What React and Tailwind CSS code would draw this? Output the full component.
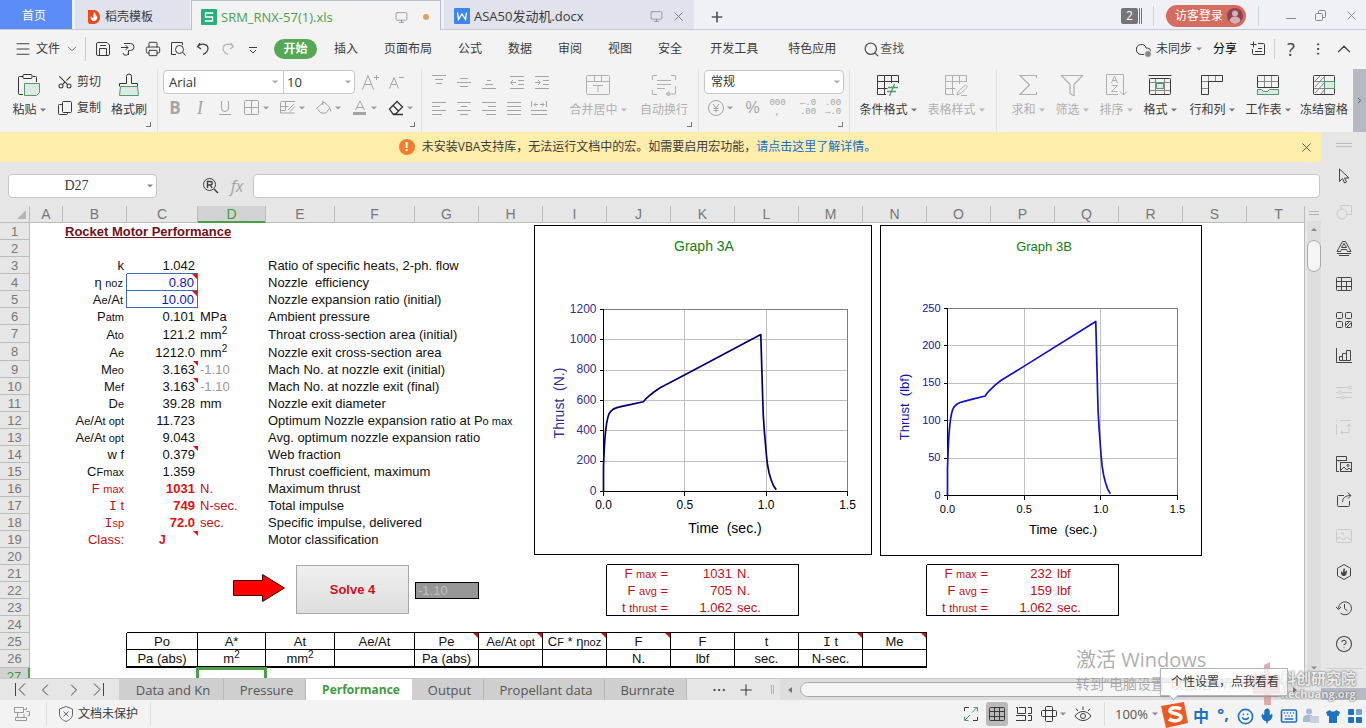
import {
  ChevronDown,
  ChevronLeft,
  ChevronRight,
  ChevronUp,
  CircleHelp,
  Cloud,
  Ellipsis,
  EllipsisVertical,
  Keyboard,
  Menu,
  Mic,
  Monitor,
  Plus,
  Printer,
  Scissors,
  Search,
  Smile,
  X,
} from "lucide-react";

// ---------------- Icon helpers ----------------

function Glyph({ w = 16, h = w, className = "", children }) {
  return (
    <svg
      width={w}
      height={h}
      viewBox={`0 0 ${w} ${h}`}
      fill="none"
      stroke="currentColor"
      strokeWidth="1"
      className={`shrink-0 ${className}`}
    >
      {children}
    </svg>
  );
}

function Caret({ className = "text-[#8a8a8a]" }) {
  return (
    <svg width="6" height="4" viewBox="0 0 6 4" className={`shrink-0 ${className}`}>
      <path d="M0 0.5h6L3 3.5z" fill="currentColor" />
    </svg>
  );
}

function Lines({ rows, w = 14 }) {
  return (
    <Glyph w={w} h={14}>
      {rows.map(([x1, x2, y], i) => (
        <path key={i} d={`M${x1} ${y + 0.5}H${x2}`} />
      ))}
    </Glyph>
  );
}

// ---------------- Title bar ----------------

function TitleBar() {
  return (
    <header className="flex h-[30px] shrink-0 border-b border-[#c5c9dc] bg-[#f0f1f6]">
      <button className="w-[72px] bg-[#5b8cf7] pr-1 pt-[3px] text-white">首页</button>
      <button className="ml-[3px] flex w-[115px] items-center gap-1 bg-[#e0e3ec] pl-3 pt-[5px]">
        <svg width="14" height="16" viewBox="0 0 14 16">
          <path d="M1 1h6a6 7 0 0 1 0 14H3a2 2 0 0 1-2-2z" fill="#f0481c" />
          <path d="M7 3c3 2 1 4 2 5l1-2c1 4-1 6-3 6S3 10 4 7c1 1 1 2 2 2 1-2 0-4 1-6z" fill="#fff" />
        </svg>
        稻壳模板
      </button>
      <button className="mb-[-1px] ml-[1px] flex w-[250px] items-center gap-1 border border-b-0 border-[#b9bed2] bg-[#f3f3f3] pl-[9px] pt-[3px] text-[#4c9f4c]">
        <svg width="16" height="16" viewBox="0 0 16 16" className="shrink-0">
          <rect width="16" height="16" rx="1" fill="#27b07c" />
          <path d="M11.500 5V4h-7v4h7v4h-7v-1" fill="none" stroke="#fff" strokeWidth="1.300" />
        </svg>
        <span className="flex-1 text-left text-[13px]">SRM_RNX-57(1).xls</span>
        <Monitor size={13} strokeWidth={1.5} className="text-[#8b8e96]" />
        <span className="mx-[11px] size-[6px] rounded-full bg-[#e2a060]" />
      </button>
      <button className="ml-[3px] flex w-[250px] items-center gap-1 bg-[#e0e3ec] pl-[10px] pt-[3px]">
        <svg width="16" height="16" viewBox="0 0 16 16" className="shrink-0">
          <rect width="16" height="16" rx="1" fill="#3f86ea" />
          <path d="M3.500 4.500l1 7L8 6l3.500 5.500 1-7" fill="none" stroke="#fff" strokeWidth="1.300" />
        </svg>
        <span className="flex-1 text-left text-[13px]">ASA50发动机.docx</span>
        <Monitor size={13} strokeWidth={1.5} className="text-[#8b8e96]" />
        <X size={15} strokeWidth={1.5} className="mx-1 mr-[8px] text-[#777]" />
      </button>
      <button aria-label="新建" className="ml-[15px] pt-1">
        <Plus size={16} strokeWidth={2.5} className="text-[#555]" />
      </button>

      <div className="ml-auto flex items-center pt-[2px]">
        <span className="flex h-4 gap-[1px]">
          <b className="w-[17px] rounded-[2px] bg-[#737578] text-center font-normal leading-4 text-white">2</b>
          <i className="w-px bg-[#737578]" />
          <i className="w-px bg-[#737578]" />
        </span>
        <span className="ml-[11px] h-[20px] w-px bg-[#d0d2d8]" />
        <button className="ml-3 flex h-[22px] w-[80px] items-center gap-1 rounded-full bg-[#d66b5f] pl-[9px] text-white">
          访客登录
          <svg width="16" height="16" viewBox="0 0 16 16" className="shrink-0">
            <circle cx="8" cy="8" r="8" fill="#8c4353" />
            <circle cx="8" cy="5.500" r="3" fill="#d5aeb6" />
            <path d="M2.500 13a5.500 4.500 0 0 1 11 0A8 8 0 0 1 8 16a8 8 0 0 1-5.500-3z" fill="#d5aeb6" />
          </svg>
        </button>
        <span className="ml-3 h-[20px] w-px bg-[#d0d2d8]" />
        <span className="flex w-[107px] items-center justify-between pl-[26px] pr-[7px] text-[#888]">
          <button aria-label="最小化">
            <Glyph w={12} h={12}><path d="M1 8.500h10" /></Glyph>
          </button>
          <button aria-label="还原">
            <Glyph w={13} h={13}>
              <rect x="1.500" y="4.500" width="7" height="7" rx="1" />
              <path d="M4.500 4V2.500a1 1 0 0 1 1-1h5a1 1 0 0 1 1 1v5a1 1 0 0 1-1 1H9" />
            </Glyph>
          </button>
          <button aria-label="关闭">
            <X size={15} strokeWidth={1.4} />
          </button>
        </span>
      </div>
    </header>
  );
}

// ---------------- Menu bar ----------------

const MENU_TABS = [
  ["插入", "px-[13px]"],
  ["页面布局", "px-[13px]"],
  ["公式", "px-[13px]"],
  ["数据", "px-[13px]"],
  ["审阅", "px-[13px]"],
  ["视图", "px-[13px]"],
  ["安全", "px-[13px]"],
  ["开发工具", "px-[15px]"],
  ["特色应用", "px-[15px]"],
];

function QuickButton({ label, off, children }) {
  return (
    <button aria-label={label} className={`flex w-[25px] justify-center pr-px ${off ? "text-[#b5b5b5]" : ""}`}>
      {children}
    </button>
  );
}

function MenuBar() {
  return (
    <nav className="flex h-[39px] shrink-0 items-center bg-[#f3f3f3] pb-px pl-[14px]">
      <button className="flex items-center">
        <Menu size={18} strokeWidth={1.3} />
        <span className="ml-1">文件</span>
        <ChevronDown size={14} strokeWidth={1.3} className="ml-[5px]" />
      </button>
      <span className="ml-[6px] h-6 w-px bg-[#c9c9c9]" />
      <div className="flex pl-[5px]">
        <QuickButton label="保存">
          <Glyph>
            <path d="M1.500 13V3a1.500 1.500 0 0 1 1.500-1.500h9l2.500 2.500v9a1.500 1.500 0 0 1-1.500 1.500H3A1.500 1.500 0 0 1 1.500 13zM4.500 14V7.500h7V14M5 4.500h6" />
          </Glyph>
        </QuickButton>
        <QuickButton label="输出为PDF">
          <Glyph>
            <path d="M4 2.500h6.500a3.500 3.500 0 0 1 0 7H8.500V14M1 6.500h7M5.500 4l2.500 2.500L5.500 9M8.500 10v1a2.500 2.500 0 0 1-5.500 1" />
          </Glyph>
        </QuickButton>
        <QuickButton label="打印">
          <Printer size={16} strokeWidth={1.5} />
        </QuickButton>
        <QuickButton label="打印预览">
          <Glyph>
            <path d="M6 13.500H1.500v-12h11V4M12.500 11l3 3.500" />
            <circle cx="9.500" cy="8.500" r="4" />
          </Glyph>
        </QuickButton>
        <QuickButton label="撤销">
          <Glyph><path d="M5 2L2.500 5.500 6 8M2.500 5.500C6 2 13 2.500 13 7.500c0 3-2 4.500-5 6" strokeWidth="1.200" /></Glyph>
        </QuickButton>
        <QuickButton label="恢复" off>
          <Glyph><path d="M11 2l2.500 3.500L10 8M13.500 5.500C10 2 3 2.500 3 7.500c0 3 2 4.500 5 6" strokeWidth="1.200" /></Glyph>
        </QuickButton>
        <QuickButton label="更多">
          <Glyph w={10} h={16}><path d="M1 6.500h8M2 9l3 3 3-3" /></Glyph>
        </QuickButton>
      </div>
      <button className="ml-2 h-5 w-[43px] rounded-full bg-[#55a955] font-bold leading-5 text-white">开始</button>
      <div className="ml-1 flex">
        {MENU_TABS.map(([label, pad]) => (
          <button key={label} className={pad}>{label}</button>
        ))}
      </div>
      <button className="ml-[12px] flex items-center text-[#555]">
        <Search size={17} strokeWidth={1.8} />
        查找
      </button>

      <div className="ml-auto flex items-center pr-[10px]">
        <button className="flex items-center gap-1">
          <span className="relative">
            <Cloud size={17} strokeWidth={1.4} />
            <span className="absolute bottom-0 right-0 size-2 rounded-full border border-[#f3f3f3] bg-[#888]" />
          </span>
          未同步
          <Caret />
        </button>
        <button className="ml-[11px] text-black">分享</button>
        <button aria-label="批注" className="ml-[13px]">
          <Glyph>
            <path d="M8 2.500h5.500a1 1 0 0 1 1 1v10h-11a1 1 0 0 1-1-1V8M3.500 0.500v6M0.500 3.500h6M5 10.500h7M8 7.500h4" />
          </Glyph>
        </button>
        <span className="ml-2 h-5 w-px bg-[#d0d0d0]" />
        <button aria-label="帮助" className="ml-1 w-6 text-[18px] leading-5">?</button>
        <button aria-label="选项" className="ml-[3px] flex w-6 justify-center">
          <EllipsisVertical size={16} strokeWidth={1.5} />
        </button>
        <button aria-label="收起功能区" className="ml-[2px] flex w-6 justify-center">
          <ChevronUp size={22} strokeWidth={1.2} />
        </button>
      </div>
    </nav>
  );
}

// ---------------- Ribbon ----------------

function BigButton({ label, caret, off, width, children }) {
  return (
    <button className={`flex shrink-0 flex-col items-center ${width} ${off ? "text-[#b0b0b0]" : ""}`}>
      <span className="flex h-[32px] items-center">{children}</span>
      <span className="flex h-[18px] items-center gap-[3px] whitespace-nowrap leading-[18px]">
        {label}
        {caret && <Caret className={off ? "text-[#b8b8b8]" : "text-[#777]"} />}
      </span>
    </button>
  );
}

function Tool({ label, width = "w-[25px]", children }) {
  return (
    <button aria-label={label} className={`flex h-[26px] shrink-0 items-center justify-center pr-px ${width}`}>
      {children}
    </button>
  );
}

function DropTool({ label, dark, children }) {
  return (
    <button
      aria-label={label}
      className={`flex h-[26px] w-[36px] shrink-0 items-center gap-[3px] pl-[2px] ${dark ? "text-[#333]" : ""}`}
    >
      {children}
      <Caret className="text-[#999]" />
    </button>
  );
}

function Group({ className = "", corner, children }) {
  return (
    <section className={`relative flex h-full shrink-0 border-r border-[#e2e2e2] ${className}`}>
      {children}
      {corner && (
        <span className="absolute bottom-[5px] right-[6px] size-[5px] border-b border-r border-[#777]" />
      )}
    </section>
  );
}

function Ribbon() {
  return (
    <div className="flex h-[63px] shrink-0 bg-[#f3f3f3]">
      <Group corner className="w-[158px] pl-[10px]">
        <BigButton label="粘贴" caret width="w-[38px]">
          <Glyph w={24} h={24}>
            <path d="M6 3.500H2.500a1 1 0 0 0-1 1v16a1 1 0 0 0 1 1H6M16 3.500h2.500a1 1 0 0 1 1 1V9" stroke="#333" />
            <rect x="6" y="1.500" width="9" height="4" rx="1" stroke="#333" />
            <path d="M7.500 10.500h15v9l-3 3h-12z" fill="#dfe9e3" stroke="#4f9a6c" />
          </Glyph>
        </BigButton>
        <div className="ml-[9px] flex flex-col">
          <button className="flex h-[26px] items-center gap-1">
            <Scissors size={16} strokeWidth={1.6} className="-rotate-90" />
            剪切
          </button>
          <button className="flex h-[26px] items-center gap-1">
            <Glyph>
              <rect x="5.500" y="1.500" width="9" height="11" rx="1" />
              <path d="M5 4.500H2.500a1 1 0 0 0-1 1v8a1 1 0 0 0 1 1h7a1 1 0 0 0 1-1V13" />
            </Glyph>
            复制
          </button>
        </div>
        <BigButton label="格式刷" width="ml-[6px] w-[44px]">
          <Glyph w={22} h={24}>
            <path d="M1.500 13.500v-3h7v-7a2 2 0 0 1 5 0v7h6v3" stroke="#333" />
            <path d="M2.500 13.500h17l1 9h-19z" fill="#dfe9e3" stroke="#4f9a6c" />
          </Glyph>
        </BigButton>
      </Group>

      <Group corner className="w-[264px] pl-[5px] text-[#a5a5a5]">
        <div>
          <div className="flex h-[26px] items-center">
            <div className="flex h-6 w-[192px] rounded border border-[#c6c6c6] bg-white text-[13px] text-[#333]">
              <button className="flex w-[120px] items-center justify-between border-r border-[#c6c6c6] px-[5px]">
                Arial <Caret className="text-[#aaa]" />
              </button>
              <button className="flex flex-1 items-center justify-between px-[3px]">
                10 <Caret className="text-[#aaa]" />
              </button>
            </div>
            <button aria-label="增大字号" className="ml-[2px] flex w-[26px] justify-center">
              <Glyph w={18} h={18}><path d="M1.500 16.500L7 2.500l5.500 14M3.500 11.500h7M13 4.500h5M15.500 2v5" /></Glyph>
            </button>
            <button aria-label="减小字号" className="flex w-[26px] justify-center">
              <Glyph w={18} h={18}><path d="M2.500 15.500L7 4.500l4.500 11M4.500 11.500h5M12 4.500h5" /></Glyph>
            </button>
          </div>
          <div className="flex">
            <Tool label="加粗"><b className="text-[17px]">B</b></Tool>
            <Tool label="倾斜"><i className="font-['Liberation_Serif'] text-[18px]">I</i></Tool>
            <Tool label="下划线">
              <Glyph w={12} h={16}><path d="M2.500 1v7a3.500 3.500 0 0 0 7 0V1M0 14.500h12" /></Glyph>
            </Tool>
            <span className="w-1" />
            <DropTool label="边框">
              <Glyph><rect x="0.500" y="0.500" width="14" height="14" rx="1" /><path d="M7.500 0.500v14M0.500 7.500h14" /></Glyph>
            </DropTool>
            <DropTool label="绘图边框">
              <Glyph>
                <path d="M15 1.500H1.500a1 1 0 0 0-1 1V13h14M0.500 6.500h8M5.500 1.500v9M0.500 10.500h5M8 10l6-6M10 11.500l5-5" />
              </Glyph>
            </DropTool>
            <DropTool label="填充颜色">
              <Glyph><path d="M2 7l6-5 6 5.500-4 5.500H5L1 8.500zM7 0.500V5M14 8.500l1 3" /></Glyph>
            </DropTool>
            <DropTool label="字体颜色">
              <Glyph><path d="M3.500 10L8 1l4.500 9M5 7.500h6" /><path d="M1 13.500h13" strokeWidth="3" /></Glyph>
            </DropTool>
            <DropTool label="清除" dark>
              <Glyph><path d="M1.500 9l7.500-7.500 5.500 5.500-7 7H5zM5 5.500l5.500 5.500M5 14.500h10" strokeWidth="1.300" /></Glyph>
            </DropTool>
          </div>
        </div>
      </Group>

      <Group corner className="w-[277px] pl-[5px] text-[#a5a5a5]">
        <div className="w-[128px]">
          <div className="flex">
            <Tool label="顶端对齐"><Lines rows={[[0, 14, 0], [3, 11, 4], [4, 10, 8]]} /></Tool>
            <Tool label="垂直居中"><Lines rows={[[3, 11, 3], [0, 14, 7], [3, 11, 11]]} /></Tool>
            <Tool label="底端对齐"><Lines rows={[[5, 9, 5], [3, 11, 9], [0, 14, 13]]} /></Tool>
            <span className="w-[3px]" />
            <Tool label="减少缩进">
              <Glyph w={14} h={14}><path d="M0 1.500h14M8 5.500h6M8 9.500h6M0 13.500h14M1 7.500h5M3 5L0.500 7.500 3 10" /></Glyph>
            </Tool>
            <Tool label="增加缩进">
              <Glyph w={14} h={14}><path d="M0 1.500h14M8 5.500h6M8 9.500h6M0 13.500h14M0 7.500h5M3 5l2.500 2.500L3 10" /></Glyph>
            </Tool>
          </div>
          <div className="flex">
            <Tool label="左对齐"><Lines rows={[[0, 14, 1], [0, 8, 5], [0, 14, 9], [0, 10, 13]]} /></Tool>
            <Tool label="水平居中"><Lines rows={[[0, 14, 1], [4, 10, 5], [0, 14, 9], [3, 11, 13]]} /></Tool>
            <Tool label="右对齐"><Lines rows={[[0, 14, 1], [6, 14, 5], [0, 14, 9], [4, 14, 13]]} /></Tool>
            <Tool label="两端对齐"><Lines rows={[[0, 14, 1], [0, 14, 5], [0, 14, 9], [0, 14, 13]]} /></Tool>
            <Tool label="分散对齐">
              <Glyph><path d="M0.500 1v6M15.500 1v6M3 4.500h4M9 4.500h4M5 2.500l-2 2 2 2M11 2.500l2 2-2 2M0 10.500h16M0 14.500h16" /></Glyph>
            </Tool>
          </div>
        </div>
        <BigButton label="合并居中" caret off width="ml-[11px] w-[64px]">
          <Glyph w={24} h={22}>
            <rect x="0.500" y="1.500" width="23" height="19" rx="1" />
            <path d="M0.500 7.500h23M8.500 1.500v6M15.500 1.500v6M7 11.500h10M12 11.500V18" />
          </Glyph>
        </BigButton>
        <BigButton label="自动换行" off width="ml-[6px] w-[56px]">
          <Glyph w={24} h={22}>
            <path d="M5 1.500H0.500V6M19 1.500h4.500V6M5 20.500H0.500V16M5 6.500h14M5 10.500h14M5 14.500h8M23.500 12v8h-9M17 17.500l-3 2.500 3 2z" />
          </Glyph>
        </BigButton>
      </Group>

      <Group corner className="w-[151px] pl-[5px] text-[#a5a5a5]">
        <div>
          <div className="flex h-[26px] items-center">
            <select
              aria-label="数字格式"
              className="h-6 w-[140px] appearance-none rounded border border-[#c6c6c6] bg-white pl-[6px] text-[12px] text-[#333]"
            >
              <option>常规</option>
            </select>
            <span className="ml-[-10px]"><Caret className="text-[#aaa]" /></span>
          </div>
          <div className="flex pl-[2px]">
            <DropTool label="货币">
              <Glyph><circle cx="8" cy="8" r="7.500" /><path d="M5 4l3 4 3-4M8 8v4.500M5.500 8.500h5M5.500 10.500h5" /></Glyph>
            </DropTool>
            <Tool label="百分比" width="w-[22px]"><span className="font-['Liberation_Sans'] text-[16px]">%</span></Tool>
            <Tool label="千位分隔" width="w-[28px]">
              <span className="font-['Liberation_Mono'] text-[9px] leading-[9px]">000<br />,</span>
            </Tool>
            <span className="w-[4px]" />
            <Tool label="增加小数位"><span className="font-['Liberation_Mono'] text-[9px] leading-[9px]">←.0<br />.00</span></Tool>
            <Tool label="减少小数位"><span className="font-['Liberation_Mono'] text-[9px] leading-[9px]">.00<br />→.0</span></Tool>
          </div>
        </div>
      </Group>

      <Group className="w-[147px] gap-1 pl-[6px]">
        <BigButton label="条件格式" caret width="w-[64px]">
          <Glyph w={24} h={22}>
            <path d="M10 20.500H1.500v-19h21V9M1.500 7.500h21M1.500 14.500h10M8.500 1.500v19M15.500 1.500V9" />
            <path d="M12 13.500h10M11 17.500h9M18.500 10l-5 12" stroke="#4f9a6c" strokeWidth="1.300" />
          </Glyph>
        </BigButton>
        <BigButton label="表格样式" caret off width="w-[64px]">
          <Glyph w={24} h={22}>
            <path d="M10 20.500H1.500v-19h21V8M1.500 7.500h21M1.500 14.500h10M8.500 1.500v19M15.500 1.500V10M13 21l1.500-4 7-6 2 2-7 6.500zM17 21.500h6" />
          </Glyph>
        </BigButton>
      </Group>

      <section className="flex min-w-0 flex-1 gap-1 overflow-hidden pl-[11px]">
        <BigButton label="求和" caret off width="w-[40px]">
          <Glyph w={20} h={22}><path d="M18.500 4V1.500H2L11.500 11 2 20.500h16.500V18" strokeWidth="1.200" /></Glyph>
        </BigButton>
        <BigButton label="筛选" caret off width="w-[40px]">
          <Glyph w={24} h={22}><path d="M1.500 1.500h21L14 10.500V22l-4-2.500v-9z" strokeWidth="1.200" /></Glyph>
        </BigButton>
        <BigButton label="排序" caret off width="w-[40px]">
          <Glyph w={24} h={24}>
            <path d="M14 21.500H2.500v-20h17V9M19.500 9v13M16 18.500l3.500 3.500 3.500-3.500M7.500 10l3-7 3 7M8.500 7.500h4M7.500 12.500h6l-6 6h6" />
          </Glyph>
        </BigButton>
        <BigButton label="格式" caret width="w-[40px]">
          <Glyph w={24} h={22}>
            <path d="M0.500 1.500h23" />
            <path d="M7.500 4.500v16M16.500 4.500v16M1.500 8.500h21M1.500 16.500h21" stroke="#888" />
            <rect x="1.500" y="4.500" width="21" height="16" rx="1" />
            <rect x="8.500" y="9.500" width="7" height="5" fill="#dfe9e3" stroke="#4f9a6c" />
          </Glyph>
        </BigButton>
        <BigButton label="行和列" caret width="w-[56px]">
          <Glyph w={24} h={22}>
            <path d="M8.500 1.500v6M15.500 1.500v6M1.500 7.500h7M1.500 14.500h7" stroke="#888" />
            <path d="M1.500 1.500h21v6h-14v13h-7z" />
          </Glyph>
        </BigButton>
        <BigButton label="工作表" caret width="w-[48px]">
          <Glyph w={24} h={22}>
            <path d="M1.500 7.500h21M8.500 1.500v12M15.500 1.500v12" stroke="#888" />
            <path d="M1.500 13.500v-11a1 1 0 0 1 1-1h19a1 1 0 0 1 1 1v11z" />
            <path d="M1.500 15.500v5h21v-5h-9l-2 2h-4l-2-2z" fill="#dfe9e3" stroke="#4f9a6c" />
          </Glyph>
        </BigButton>
        <BigButton label="冻结窗格" width="w-[56px]">
          <Glyph w={24} h={22}>
            <path d="M12.500 1.500v19M1.500 7.500h11M1.500 14.500h11M3 7l5-5M3 13l9-10M3 19l9-10M9 20l4-5" stroke="#888" />
            <rect x="1.500" y="1.500" width="21" height="19" rx="1" />
            <rect x="12.500" y="7.500" width="10" height="7" fill="#dfe9e3" stroke="#4f9a6c" />
          </Glyph>
        </BigButton>
      </section>
      <button aria-label="向右滚动" className="flex w-[13px] shrink-0 items-center justify-center bg-[#b5b9c2]">
        <ChevronRight size={9} strokeWidth={2} />
      </button>
    </div>
  );
}

// ---------------- Message + formula bar ----------------

function MessageBar() {
  return (
    <div className="flex h-[30px] shrink-0 items-center bg-[#ffedab] pr-[7px]">
      <p className="flex flex-1 items-center justify-center">
        <b className="mr-[7px] size-4 rounded-full bg-[#f08030] text-center leading-4 text-white">!</b>
        未安装VBA支持库，无法运行文档中的宏。如需要启用宏功能，
        <a href="#help" className="text-[#0f6cd6]">请点击这里了解详情。</a>
        <span className="w-6" />
      </p>
      <button aria-label="关闭提示">
        <X size={15} strokeWidth={1.3} />
      </button>
    </div>
  );
}

function FormulaBar() {
  return (
    <div className="flex h-11 shrink-0 items-center pl-2 pr-px pt-1">
      <div className="flex h-6 w-[149px] items-center rounded border border-[#c6c6c6] bg-white pr-[3px]">
        <input
          aria-label="名称框"
          defaultValue="D27"
          className="w-full pr-[3px] text-center font-['Liberation_Serif'] text-[14px] outline-none"
        />
        <Caret />
      </div>
      <button aria-label="查找函数" className="ml-[46px]">
        <Glyph>
          <circle cx="6.500" cy="6.500" r="6" />
          <path d="M4.500 10V3.500h3a1.500 1.500 0 0 1 0 3.500h-3M7.500 7l1.500 3M11 11l4 4" strokeWidth="1.400" />
        </Glyph>
      </button>
      <button aria-label="插入函数" className="ml-[9px] w-[18px] text-[16px] italic leading-5 text-[#a2a2a2]">fx</button>
      <input aria-label="编辑栏" className="ml-[7px] h-6 min-w-0 flex-1 rounded border border-[#c6c6c6] bg-white px-2 outline-none" />
    </div>
  );
}

// ---------------- Sheet data ----------------

const COLUMNS = [
  ["A", "w-[33px]"],
  ["B", "w-[64px]"],
  ["C", "w-[71px]"],
  ["D", "w-[68px]"],
  ["E", "w-[69px]"],
  ["F", "w-[80px]"],
  ["G", "w-[64px]"],
  ["H", "w-[64px]"],
  ["I", "w-[64px]"],
  ["J", "w-[64px]"],
  ["K", "w-[64px]"],
  ["L", "w-[64px]"],
  ["M", "w-[64px]"],
  ["N", "w-[64px]"],
  ["O", "w-[64px]"],
  ["P", "w-[64px]"],
  ["Q", "w-[64px]"],
  ["R", "w-[64px]"],
  ["S", "w-[64px]"],
  ["T", ""],
];

function S({ children }) {
  return <small className="text-[11px] leading-none">{children}</small>;
}

// Roman capital with bars, used for impulse and motor class
function Bar({ children }) {
  return <span className="font-['Liberation_Mono'] leading-none">{children}</span>;
}

const mm2 = <>mm<sup className="text-[10px]">2</sup></>;
const RED = "text-[#c01020]";
const BOLD = "font-bold text-[#e01010]";
const BLUE = "text-[#1010d0]";
const GHOST = "text-[#999]";

// row: [label, value, unit, description, value class, unit class]
const RESULTS = {
  3: ["k", "1.042", "", "Ratio of specific heats, 2-ph. flow"],
  4: [<>η <S>noz</S></>, "0.80", "", "Nozzle\u00a0 efficiency", BLUE],
  5: [<>A<S>e</S>/A<S>t</S></>, "10.00", "", "Nozzle expansion ratio (initial)", BLUE],
  6: [<>P<S>atm</S></>, "0.101", "MPa", "Ambient pressure"],
  7: [<>A<S>to</S></>, "121.2", mm2, "Throat cross-section area (initial)"],
  8: [<>A<S>e</S></>, "1212.0", mm2, "Nozzle exit cross-section area"],
  9: [<>M<S>eo</S></>, "3.163", "-1.10", "Mach No. at nozzle exit (initial)", "", GHOST],
  10: [<>M<S>ef</S></>, "3.163", "-1.10", "Mach No. at nozzle exit (final)", "", GHOST],
  11: [<>D<S>e</S></>, "39.28", "mm", "Nozzle exit diameter"],
  12: [<>A<S>e</S>/A<S>t opt</S></>, "11.723", "", <>Optimum Nozzle expansion ratio at P<S>o max</S></>],
  13: [<>A<S>e</S>/A<S>t opt</S></>, "9.043", "", "Avg. optimum nozzle expansion ratio"],
  14: ["w f", "0.379", "", "Web fraction"],
  15: [<>C<S>Fmax</S></>, "1.359", "", "Thrust coefficient, maximum"],
  16: [<>F <S>max</S></>, "1031", "N.", "Maximum thrust", BOLD, RED],
  17: [<><Bar>I</Bar> t</>, "749", "N-sec.", "Total impulse", BOLD, RED],
  18: [<><Bar>I</Bar><S>sp</S></>, "72.0", "sec.", "Specific impulse, delivered", BOLD, RED],
  19: ["Class:", <Bar>J</Bar>, "", "Motor classification", BOLD, RED],
};

const CELLS = {
  B1: [<u>Rocket Motor Performance</u>, "text-left pl-[2px] font-bold text-[#701018]"],
  G22: ["-1.10", "pl-[2px] border border-black bg-[#969696] text-[#c0c0c0]"],
};

Object.entries(RESULTS).forEach(([row, [label, value, unit, text, valueClass = "", unitClass = ""]]) => {
  CELLS[`B${row}`] = [label, `text-right pr-[3px] ${row > 15 ? RED : ""}`];
  CELLS[`C${row}`] = [value, `${row === "19" ? "text-center" : "text-right pr-[3px]"} ${valueClass}`];
  CELLS[`D${row}`] = [unit, `pl-[2px] ${unitClass}`];
  CELLS[`E${row}`] = [text, "pl-[2px]"];
});

const SUMMARY = [
  [21, <>F <S>max</S> =</>, "1031", "N.", "232", "lbf"],
  [22, <>F <S>avg</S> =</>, "705", "N.", "159", "lbf"],
  [23, <>t <S>thrust</S> =</>, "1.062", "sec.", "1.062", "sec."],
];

SUMMARY.forEach(([row, label, a, unitA, b, unitB]) => {
  CELLS[`J${row}`] = CELLS[`O${row}`] = [label, `text-right pr-[3px] ${RED}`];
  CELLS[`K${row}`] = [a, `text-right pr-[3px] ${RED}`];
  CELLS[`L${row}`] = [unitA, `pl-[2px] ${RED}`];
  CELLS[`P${row}`] = [b, `text-right pr-[3px] ${RED}`];
  CELLS[`Q${row}`] = [unitB, `pl-[2px] ${RED}`];
});

const HEADINGS = [
  ["C", "Po", "Pa (abs)"],
  ["D", "A*", <>m<sup className="text-[10px]">2</sup></>],
  ["E", "At", mm2],
  ["F", "Ae/At", ""],
  ["G", "Pe", "Pa (abs)"],
  ["H", <>A<S>e</S>/A<S>t opt</S></>, ""],
  ["I", <>C<S>F</S> * η<S>noz</S></>, ""],
  ["J", "F", "N."],
  ["K", "F", "lbf"],
  ["L", "t", "sec."],
  ["M", <><Bar>I</Bar> t</>, "N-sec."],
  ["N", "Me", ""],
];

HEADINGS.forEach(([col, name, unit]) => {
  CELLS[`${col}25`] = [name, "text-center"];
  CELLS[`${col}26`] = [unit, "text-center"];
});

const NOTES = ["C4", "C5", "C9", "C10", "C14", "C19", "G25", "H25", "I25", "J25", "M25", "N25"];

// Cell frames are drawn on the right and bottom edges only
function frame(col, row) {
  const black = "border-black";
  const blue = "border-[#4068c0]";
  if (col === "B" && (row === 4 || row === 5)) return `border-r pb-px ${blue}`;
  if (col === "C" && row === 3) return `border-b ${blue}`;
  if (col === "C" && (row === 4 || row === 5)) return `border-r border-b ${blue}`;
  if (row === 24 && col >= "C" && col <= "N") return `border-b ${black}`;
  if ((row === 25 || row === 26) && col === "B") return `border-r ${black}`;
  if (row === 25 && col >= "C" && col <= "N") return `border-r border-b ${black}`;
  if (row === 26 && col >= "C" && col <= "N") return `border-r border-b-2 ${black}`;
  const boxed = (col >= "J" && col <= "L") || (col >= "O" && col <= "Q");
  if (row === 20 && boxed) return `border-b ${black}`;
  if (row >= 21 && row <= 23) {
    if (col === "G" && row === 22) return "";
    const right = "ILNQ".includes(col) ? `border-r ${black}` : "";
    return `${right} ${row === 23 && boxed ? `border-b ${black}` : "pb-px"}`;
  }
  return "pb-px";
}

// ---------------- Charts ----------------

// [seconds, newtons]
const THRUST = [
  [0, 0], [0, 162], [0.003, 240], [0.006, 309], [0.01, 368], [0.014, 408], [0.02, 455],
  [0.027, 489], [0.034, 512], [0.045, 529], [0.06, 543], [0.082, 553], [0.12, 563],
  [0.164, 573], [0.246, 592], [0.26, 611], [0.277, 627], [0.31, 656], [0.348, 684],
  [0.498, 768], [0.967, 1035], [0.973, 820], [0.978, 640], [0.982, 507], [0.989, 395],
  [0.996, 309], [1.002, 235], [1.008, 178], [1.018, 122], [1.03, 79], [1.045, 38], [1.062, 11],
];

function ThrustChart({ title, unit, factor, max, step, w, h, plot, ink, labelInk, font, place }) {
  const { x, y, pw, ph } = plot;
  const px = (t) => x + (t / 1.5) * pw;
  const py = (v) => y + ph - (v / max) * ph;
  const ticks = [];
  for (let v = 0; v <= max; v += step) ticks.push(v);
  const points = THRUST.map(([t, n]) => `${px(t)},${py(n * factor)}`).join(" ");
  return (
    <figure className={`absolute border border-black bg-white ${place}`}>
      <svg width={w} height={h} viewBox={`0 0 ${w} ${h}`} fontFamily="Liberation Sans, Arial, sans-serif" fontSize={font.tick}>
        <text x={font.titleX} y="25" textAnchor="middle" fontSize={font.title} fill="#128012">{title}</text>
        <g shapeRendering="crispEdges" stroke="#c0c0c0">
          {ticks.map((v) => <path key={v} d={`M${x} ${py(v)}h${pw}`} />)}
          <path d={`M${px(0.5)} ${y}v${ph}M${px(1)} ${y}v${ph}`} />
          <path d={`M${x} ${y}h${pw}v${ph}`} fill="none" stroke="#808080" />
          <path d={`M${x} ${y}v${ph}h${pw}`} fill="none" stroke="#000" />
          {ticks.map((v) => <path key={v} d={`M${x - 4} ${py(v)}h4`} stroke="#000" />)}
          {[0, 0.5, 1, 1.5].map((t) => <path key={t} d={`M${px(t)} ${y + ph}v4`} stroke="#000" />)}
        </g>
        {ticks.map((v) => (
          <text key={v} x={x - 7} y={py(v) + 3} textAnchor="end" fill={labelInk}>{v}</text>
        ))}
        {[0, 0.5, 1, 1.5].map((t) => (
          <text key={t} x={px(t)} y={y + ph + 17} textAnchor="middle">{t.toFixed(1)}</text>
        ))}
        <polyline points={points} fill="none" stroke={ink} strokeWidth="1.700" strokeLinejoin="round" />
        <text x={font.timeX} y={font.timeY} textAnchor="middle" fontSize={font.title}>Time{"\u00a0 "}(sec.)</text>
        <text
          transform={`translate(${font.sideX} ${font.sideY}) rotate(-90)`}
          textAnchor="middle"
          fontSize={font.title}
          fill={labelInk}
        >
          Thrust{"\u00a0 "}({unit})
        </text>
      </svg>
    </figure>
  );
}

// ---------------- Sheet ----------------

function rowHeight(row) {
  return row === 7 || row === 8 || row === 26 ? "h-[18px]" : "h-[17px]";
}

function Sheet() {
  const rows = Array.from({ length: 27 }, (_, i) => i + 1);
  return (
    <div className="relative min-w-0 flex-1 overflow-hidden border-r border-[#bcbcbc] bg-white">
      <table className="w-full min-w-[1311px] table-fixed border-separate border-spacing-0 whitespace-nowrap font-['Liberation_Sans'] text-[13px] leading-[15px] text-[#111]">
        <thead>
          <tr className="h-[17px] bg-[#e6e6e6] text-[14px] text-[#777]">
            <th className="w-[30px] border-b border-r border-[#bcbcbc] p-0">
              <svg width="9" height="9" viewBox="0 0 9 9" className="ml-auto mr-[3px]">
                <path d="M9 0v9H0z" fill="#b5b5b5" />
              </svg>
            </th>
            {COLUMNS.map(([name, width]) => (
              <th
                key={name}
                className={`${width} border-b border-r p-0 font-normal ${
                  name === "D"
                    ? "border-b-[#4aa04a] border-r-[#bcbcbc] bg-[#d2d2d2] text-[#3f9b3f] shadow-[inset_0_-1px_0_#4aa04a]"
                    : "border-[#bcbcbc]"
                }`}
              >
                {name}
              </th>
            ))}
          </tr>
        </thead>
        <tbody>
          {rows.map((row) => (
            <tr key={row} className={rowHeight(row)}>
              <th
                className={`border-b border-r p-0 text-center font-normal ${
                  row === 27
                    ? "border-r-2 border-[#4aa04a] bg-[#d2d2d2] text-[#3f9b3f]"
                    : "border-[#bcbcbc] bg-[#e6e6e6] text-[#777]"
                }`}
              >
                {row}
              </th>
              {COLUMNS.map(([col]) => {
                const ref = col + row;
                const [content, style] = CELLS[ref] || ["", ""];
                return (
                  <td key={ref} className={`relative px-0 align-bottom ${style} ${frame(col, row)}`}>
                    {content}
                    {NOTES.includes(ref) && (
                      <span className="absolute right-0 top-0 border-l-[5px] border-t-[5px] border-l-transparent border-t-[#e01010]" />
                    )}
                  </td>
                );
              })}
            </tr>
          ))}
        </tbody>
      </table>

      <ThrustChart
        title="Graph 3A" unit="N." factor={1} max={1200} step={200}
        w={336} h={328} place="left-[534px] top-[19px]"
        plot={{ x: 68.5, y: 83.5, pw: 244, ph: 182 }}
        ink="#000070" labelInk="#303090"
        font={{ tick: 12, title: 14, titleX: 169, timeX: 190, timeY: 307, sideX: 29, sideY: 177 }}
      />
      <ThrustChart
        title="Graph 3B" unit="lbf" factor={0.2248} max={250} step={50}
        w={320} h={329} place="left-[880px] top-[19px]"
        plot={{ x: 66.5, y: 82.5, pw: 230, ph: 187 }}
        ink="#1010d0" labelInk="#1010b0"
        font={{ tick: 11, title: 13, titleX: 163, timeX: 182, timeY: 308, sideX: 28, sideY: 181 }}
      />
      <svg width="54" height="30" viewBox="0 0 54 30" className="absolute left-[232px] top-[367px]">
        <path d="M1.500 7.500h29v-6l22 13.500-22 13.500v-6h-29z" fill="#f00" stroke="#400" />
      </svg>
      <button className="absolute left-[296px] top-[359px] h-[49px] w-[113px] border border-[#a8a8a8] bg-linear-to-b from-[#efefef] to-[#dedede] font-['Liberation_Sans'] text-[13px] font-bold text-[#d01018]">
        Solve 4
      </button>
      <div className="absolute left-[196px] top-[461px] h-8 w-[71px] border-[3px] border-[#4aa04a]" />
    </div>
  );
}

function VerticalScroll() {
  return (
    <div className="flex w-4 shrink-0 flex-col items-center bg-[#e6e6e6] pl-[2px]">
      <span className="mb-[6px] mt-[5px] h-1 w-[10px] border-y border-[#b5b5b5]" />
      <div className="flex w-full flex-1 flex-col items-center bg-[#dedede]">
        <svg width="6" height="3" viewBox="0 0 6 3" className="mt-[7px]"><path d="M0 3l3-3 3 3z" fill="#888" /></svg>
        <span className="mt-[9px] h-8 w-[14px] rounded-full border border-[#aaa] bg-[#f5f5f5]" />
        <span className="mb-2 mt-auto"><Caret /></span>
      </div>
    </div>
  );
}

// ---------------- Sheet tabs ----------------

const SHEETS = [
  ["Data and Kn", "w-[105px]"],
  ["Pressure", "w-[82px]"],
  ["Performance", "w-[106px]"],
  ["Output", "w-[72px]"],
  ["Propellant data", "w-[121px]"],
  ["Burnrate", "w-[82px]"],
];

function SheetTabs() {
  return (
    <div className="flex h-[22px] shrink-0 border-t border-[#c8c8c8] bg-[#e6e6e6] text-[13px]">
      <div className="flex w-[119px] items-center justify-between px-[13px] text-[#444]">
        <button aria-label="第一个"><Glyph w={14} h={15}><path d="M2.500 1v13M12 1.500l-6 6 6 6" /></Glyph></button>
        <button aria-label="上一个"><ChevronLeft size={20} strokeWidth={1.2} /></button>
        <button aria-label="下一个"><ChevronRight size={20} strokeWidth={1.2} /></button>
        <button aria-label="最后一个"><Glyph w={14} h={15}><path d="M11.500 1v13M2 1.500l6 6-6 6" /></Glyph></button>
      </div>
      {SHEETS.map(([name, width]) => (
        <button
          key={name}
          className={`pl-1 ${width} ${
            name === "Performance"
              ? "bg-white text-[12px] font-bold text-[#3f9b3f]"
              : "border-r border-[#b8b8b8] bg-[#cfcfcf] text-[#555]"
          }`}
        >
          {name}
        </button>
      ))}
      <button aria-label="更多工作表" className="ml-6"><Ellipsis size={16} strokeWidth={1.5} /></button>
      <button aria-label="新建工作表" className="ml-[10px]"><Plus size={18} strokeWidth={1.4} /></button>
      <span className="my-[6px] ml-[16px] w-[3px] border-x border-[#b0b0b0]" />
      <div className="ml-[6px] mr-4 flex flex-1 items-center gap-2 bg-[#dedede] px-2">
        <svg width="4" height="6" viewBox="0 0 4 6"><path d="M4 0v6L0 3z" fill="#777" /></svg>
        <span className="h-[15px] flex-1 rounded-full border border-[#aaa] bg-[#f5f5f5]" />
        <svg width="4" height="6" viewBox="0 0 4 6"><path d="M0 0v6l4-3z" fill="#777" /></svg>
      </div>
    </div>
  );
}

// ---------------- Side panel ----------------

const SIDE_TOOLS = [
  ["选择", false, <path d="M3.500 1v12.500l3-3 2 4.500 2-1-2-4h4.500z" />],
  ["形状", true, <><path d="M5 5V1.500h10.500v9H11" /><circle cx="6" cy="10" r="5" /></>],
  ["艺术字", false, <path d="M1 11.500L6.500 1.500h3L15 11.500h-3.500l-1-2h-5l-1 2zM5.500 7.500L8 3.500l2.500 4zM1 13.500h14M3 15.500h10" />],
  ["表格", false, <><rect x="0.500" y="1.500" width="15" height="13" rx="1" /><path d="M0.500 5.500h15M0.500 10.500h15M5.500 1.500v13M10.500 5.500v9" /></>],
  ["模板", false, <><rect x="0.500" y="0.500" width="6" height="6" rx="1" /><rect x="9.500" y="0.500" width="6" height="6" rx="1" /><rect x="0.500" y="9.500" width="6" height="6" rx="1" /><rect x="9.500" y="9.500" width="6" height="6" rx="1" /><path d="M10 13l3-3M11 15l4-4" /></>],
  ["图表", false, <path d="M0.500 0v14.500H16M3.500 12.500v-4h3v4zM6.500 12.500v-7h4v7zM10.500 12.500v-10h4v10z" />],
  ["属性", true, <><path d="M0 3.500h12M6 8.500h10M0 8.500h2M0 13.500h5M9 13.500h7" /><circle cx="14" cy="3.500" r="1.500" /><circle cx="4" cy="8.500" r="1.500" /><circle cx="7" cy="13.500" r="1.500" /></>],
  ["转换", true, <path d="M0.500 4v11M4 0.500h11M0 0.500h1M5 12.500h8v-8M7 10l-2.500 2.500L7 15M10.500 6.500l2.500-2.500 2.500 2.500" />],
  ["图库", false, <><path d="M3 15.500H0.500v-15h10V5M3 5.500V4M0.500 4.500h10" /><rect x="4.500" y="6.500" width="11" height="9" /><path d="M5 14l3-3 3 3 2-2 2 2" /><circle cx="12" cy="9.500" r="1" /></>],
  ["分享", false, <path d="M8 3.500H2.500a1 1 0 0 0-1 1v9a1 1 0 0 0 1 1h10a1 1 0 0 0 1-1V9M6.500 10c0-4 3-6.500 8-6.500M11.500 0.500l3.500 3-3 3" />],
  ["图片", true, <><rect x="0.500" y="1.500" width="15" height="13" rx="1" /><path d="M1 11l3-2 3 3 4-3 4 3" /><circle cx="6.500" cy="5.500" r="1" /></>],
  ["稻壳", false, <><path d="M8 0.500l6.500 3.700v7.600L8 15.500l-6.500-3.700V4.200z" /><path d="M8 4c2 2 0 3 1 4l2-2c0 4-1 6-3 6S4.500 10 5 7l2 2c0-2 0-3 1-5z" fill="currentColor" stroke="none" /></>],
  ["历史", false, <path d="M2.500 8.500a6.500 6.500 0 1 1 2 4.500M0 7l2.500 2.500L5 7M8.500 4v4.500L11.500 11" />],
];

function SidePanel() {
  return (
    <aside className="flex w-[45px] shrink-0 flex-col bg-[#e6e6e6] text-[#444]">
      <div className="flex flex-col items-center pl-px">
        <span className="mb-[11px] mt-[11px] h-1 w-4 border-y border-[#bcbcbc]" />
        {SIDE_TOOLS.map(([label, off, drawing]) => (
          <button key={label} aria-label={label} className={`flex h-9 shrink-0 items-center ${off ? "text-[#cacaca]" : ""}`}>
            <Glyph>{drawing}</Glyph>
          </button>
        ))}
        <button aria-label="帮助" className="flex h-9 shrink-0 items-center">
          <CircleHelp size={18} strokeWidth={1.4} />
        </button>
        <span className="mt-[6px] h-px w-[38px] bg-[#cfcfcf]" />
      </div>
      <button aria-label="展开" className="mt-auto flex h-3 w-full items-center justify-center bg-[#b5b9c2]">
        <ChevronDown size={11} />
      </button>
    </aside>
  );
}

// ---------------- Status bar ----------------

function SogouLogo() {
  return (
    <svg width="30" height="28" viewBox="0 0 30 28" className="shrink-0">
      <path d="M1 6L24 2l4 21-22 5z" fill="#ec5a24" />
      <path d="M21 9c-3-2-11-2-11 2 0 3 11 2 11 6 0 4-8 5-12 2" fill="none" stroke="#fff" strokeWidth="3.500" />
    </svg>
  );
}

function StatusBar() {
  return (
    <footer className="flex h-7 shrink-0 items-center bg-[#f3f3f3]">
      <button aria-label="宏" className="ml-[14px] text-[#999]">
        <Glyph><path d="M0.500 1.500h9v5h-9zM9.500 3.500h3v-2M12.500 5.500h3v4h-2M3.500 6.500v5M10 8v3.500M1.500 11.500h11v3h-11z" /></Glyph>
      </button>
      <span className="ml-4 h-6 w-px bg-[#dedede]" />
      <button className="ml-[11px] flex items-center gap-1">
        <Glyph>
          <path d="M8 0.500l6.500 2.500v5c0 4-3 6-6.500 7.500C4.500 14 1.500 12 1.500 8V3zM5.500 5.500l5 5M10.500 5.500l-5 5" stroke="#666" />
        </Glyph>
        文档未保护
      </button>
      <span className="ml-3 h-6 w-px bg-[#dedede]" />

      <div className="ml-auto flex items-center">
        <button aria-label="全屏" className="mr-[7px]">
          <Glyph>
            <path d="M1.500 5V1.500H6M14.500 11v3.500H10" />
            <path d="M9 6.500l5-5M10.500 1.500h4v4M7 9l-5 5M1.500 10.500v4h4" stroke="#4f9a6c" />
          </Glyph>
        </button>
        <button aria-label="普通视图" className="flex h-6 w-[22px] items-center justify-center rounded-[3px] bg-[#bababa]">
          <Glyph><rect x="0.500" y="1.500" width="15" height="13" rx="1" /><path d="M0.500 5.500h15M0.500 10.500h15M5.500 1.500v13M10.500 1.500v13" /></Glyph>
        </button>
        <button aria-label="分页预览" className="ml-2">
          <Glyph><path d="M0 1.500h1.500v6H9.500V1.500H3M0 9.500h9.500v5H0M12 1.500h3.500v6H12M12 14.500h3.500v-5H12" /></Glyph>
        </button>
        <button aria-label="阅读模式" className="ml-[9px] flex items-center gap-[3px]">
          <Glyph><rect x="4.500" y="0.500" width="7" height="15" rx="1" /><rect x="0.500" y="4.500" width="15" height="6" rx="1" /></Glyph>
          <Caret />
        </button>
        <button aria-label="护眼模式" className="ml-2">
          <Glyph w={18} h={16}>
            <path d="M1 10c4-6 12-6 16 0-4 6-12 6-16 0zM9 4V0.500M4 5L2 2.500M14 5l2-2.500" />
            <circle cx="9" cy="10" r="2.500" />
          </Glyph>
        </button>
        <span className="ml-3 h-6 w-px bg-[#dedede]" />
        <button className="ml-[10px] flex items-center gap-1 text-[13px] text-[#555]">
          100% <Caret />
        </button>
        <div className="ml-[2px] flex items-center text-[#1e72c0]">
          <SogouLogo />
          <b className="w-[22px] pt-1 text-center text-[16px]">中</b>
          <b className="w-[22px] text-center text-[16px] leading-4">°,</b>
          <span className="flex w-[22px] justify-center pt-1"><Smile size={17} strokeWidth={2.3} /></span>
          <span className="flex w-[22px] justify-center pt-1"><Mic size={16} strokeWidth={2.3} fill="currentColor" /></span>
          <span className="flex w-[22px] justify-center pt-1"><Keyboard size={18} strokeWidth={2.2} /></span>
          <span className="flex w-[22px] justify-center pt-1">
            <svg width="16" height="16" viewBox="0 0 16 16">
              <circle cx="6" cy="3.500" r="3" fill="#a9b9d4" />
              <path d="M0 14V11a4 4 0 0 1 4-4h5v7z" fill="#a9b9d4" />
              <rect x="7" y="8" width="9" height="7" fill="#c5d0e2" />
            </svg>
          </span>
          <span className="flex w-[22px] justify-center pt-1">
            <svg width="14" height="14" viewBox="0 0 14 14"><path d="M4 1c1 2 5 2 6 0l4 2-1.500 4H11v7H3V7H1.500L0 3z" fill="currentColor" /></svg>
          </span>
          <span className="flex w-[22px] justify-center pt-1">
            <svg width="14" height="14" viewBox="0 0 14 14" fill="currentColor">
              <rect width="6" height="6" rx="1" /><rect x="8" width="6" height="6" rx="1" opacity="0.6" />
              <rect y="8" width="6" height="6" rx="1" /><rect x="8" y="8" width="6" height="6" rx="1" />
            </svg>
          </span>
        </div>
      </div>
    </footer>
  );
}

// ---------------- Desktop overlays ----------------

function Overlays() {
  return (
    <>
      <div className="pointer-events-none absolute bottom-[32px] right-0 w-[290px] whitespace-nowrap text-[#999]/80">
        <p className="text-[20px] leading-6">激活 Windows</p>
        <p className="text-[14px] leading-6">转到“电脑设置”以激活 Windows。</p>
      </div>
      <div className="pointer-events-none absolute bottom-[21px] right-[10px] flex items-center opacity-80">
        <svg width="30" height="46" viewBox="0 0 30 46">
          <path d="M13 4l6-3v13h10v19h-9v11h-7V33H2V14h11zM20 20v7h3v-7zM8 20v7h4v-7z" fill="#d99a98" fillRule="evenodd" />
        </svg>
        <div className="flex w-[75px] flex-col items-center whitespace-nowrap font-bold text-[#eee] [text-shadow:0_0_1px_#777,0_0_2px_#777,0_0_2px_#777]">
          <span className="text-[15px] leading-5">科创研究院</span>
          <span className="text-[11px] leading-3">kechuang.org</span>
        </div>
      </div>
      <div className="absolute bottom-[32px] right-[78px] flex h-[28px] w-[128px] items-center whitespace-nowrap border border-[#b0b4c0] bg-white/70 pl-[10px] shadow">
        个性设置，点我看看
        <span className="absolute -bottom-1 left-[9px] size-[7px] rotate-45 border-b border-r border-[#b0b4c0] bg-white" />
      </div>
    </>
  );
}

export default function App() {
  return (
    <div className="relative flex h-screen flex-col overflow-hidden bg-[#e6e6e6] font-['Open_Sans','Noto_Sans_CJK_SC',sans-serif] text-[12px] leading-[18px] text-[#3a3a3a]">
      <TitleBar />
      <MenuBar />
      <Ribbon />
      <main className="flex min-h-0 flex-1">
        <div className="flex min-w-0 flex-1 flex-col">
          <MessageBar />
          <FormulaBar />
          <div className="flex min-h-0 flex-1">
            <Sheet />
            <VerticalScroll />
          </div>
          <SheetTabs />
        </div>
        <SidePanel />
      </main>
      <StatusBar />
      <Overlays />
    </div>
  );
}
